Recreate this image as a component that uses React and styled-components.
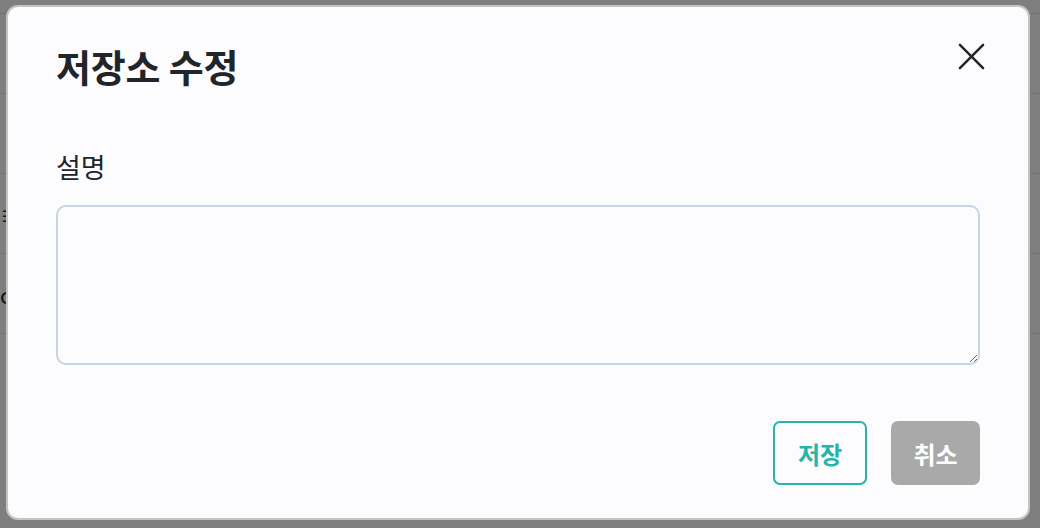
import React from "react";
import styled, { createGlobalStyle } from "styled-components";

const Global = createGlobalStyle`
  html, body { margin: 0; padding: 0; }
  body {
    width: 1040px; height: 528px; overflow: hidden;
    font-family: "Noto Sans CJK KR", "Noto Sans", sans-serif;
    background: #ffffff;
  }
`;

const Page = styled.div`
  position: relative;
  width: 1040px;
  height: 528px;
  overflow: hidden;
`;

const Table = styled.div`
  display: flex;
  flex-direction: column;
  margin-top: -66px;
`;

const Row = styled.div`
  height: 79px;
  border-bottom: 1px solid #dee2e6;
  display: flex;
  align-items: center;
  padding-left: ${(p) => p.$indent}px;
  font-size: 22px;
  color: #212529;
`;

const Overlay = styled.div`
  position: absolute;
  inset: 0;
  background: rgba(0, 0, 0, 0.5);
  display: flex;
  align-items: flex-start;
  justify-content: flex-start;
  padding: 5px 0 0 6px;
`;

const Modal = styled.div`
  position: relative;
  box-sizing: border-box;
  width: 1024px;
  height: 515px;
  background: #fcfcfe;
  border: 2px solid #c4c4c4;
  border-radius: 12px;
  padding: 34px 48px 32px 48px;
  display: flex;
  flex-direction: column;
`;

const Title = styled.h2`
  margin: 0;
  font-size: 38px;
  font-weight: 700;
  line-height: 50px;
  color: #212529;
  letter-spacing: -0.2px;
`;

const CloseButton = styled.button`
  position: absolute;
  top: 29px;
  right: 37px;
  width: 40px;
  height: 40px;
  padding: 0;
  border: none;
  background: transparent;
  display: flex;
  align-items: center;
  justify-content: center;
  cursor: pointer;
`;

const Label = styled.label`
  margin-top: 57px;
  font-size: 27px;
  font-weight: 400;
  line-height: 38px;
  color: #212529;
`;

const TextArea = styled.textarea`
  margin-top: 19px;
  box-sizing: border-box;
  width: 924px;
  height: 160px;
  border: 2px solid #c8d4e2;
  border-radius: 10px;
  background: #fcfcfe;
  padding: 10px 14px;
  font-family: inherit;
  font-size: 18px;
  resize: vertical;
  outline: none;
`;

const Footer = styled.div`
  margin-top: 56px;
  display: flex;
  justify-content: flex-end;
  gap: 24px;
`;

const Button = styled.button`
  box-sizing: border-box;
  height: 64px;
  width: ${(p) => p.$w}px;
  border-radius: 7px;
  font-family: inherit;
  font-size: 24px;
  font-weight: 700;
  cursor: pointer;
  border: 2px solid ${(p) => (p.$primary ? "#26b5a8" : "#a9a9a9")};
  background: ${(p) => (p.$primary ? "#fcfcfe" : "#a9a9a9")};
  color: ${(p) => (p.$primary ? "#26b5a8" : "#ffffff")};
`;

export default function App() {
  return (
    <>
      <Global />
      <Page>
        <Table>
          <Row $indent={20} />
          <Row $indent={20} />
          <Row $indent={20} />
          <Row $indent={-14}>≡</Row>
          <Row $indent={-8}>c</Row>
        </Table>
        <Overlay>
          <Modal>
            <Title>저장소 수정</Title>
            <CloseButton aria-label="닫기">
              <svg width="27" height="27" viewBox="0 0 28 28">
                <path
                  d="M2 2 L26 26 M26 2 L2 26"
                  stroke="#212529"
                  strokeWidth="2.6"
                  strokeLinecap="round"
                  fill="none"
                />
              </svg>
            </CloseButton>
            <Label htmlFor="desc">설명</Label>
            <TextArea id="desc" />
            <Footer>
              <Button $primary $w={94}>저장</Button>
              <Button $w={89}>취소</Button>
            </Footer>
          </Modal>
        </Overlay>
      </Page>
    </>
  );
}
